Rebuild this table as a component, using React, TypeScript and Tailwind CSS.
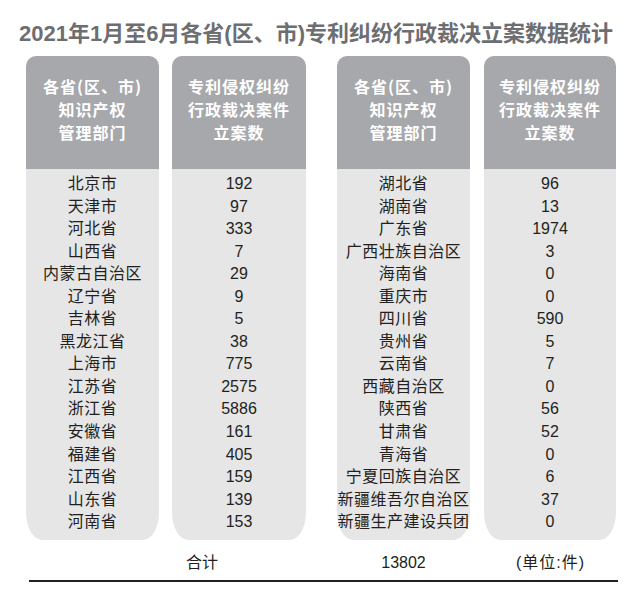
import React from 'react';

type Column = {
  header: string[];
  rows: string[];
  width: string;
  gap: string;
  names?: boolean;
};

const LEFT_NAMES = [
  '北京市', '天津市', '河北省', '山西省', '内蒙古自治区', '辽宁省', '吉林省', '黑龙江省',
  '上海市', '江苏省', '浙江省', '安徽省', '福建省', '江西省', '山东省', '河南省',
];
const LEFT_COUNTS = [
  '192', '97', '333', '7', '29', '9', '5', '38', '775', '2575', '5886', '161', '405', '159', '139', '153',
];
const RIGHT_NAMES = [
  '湖北省', '湖南省', '广东省', '广西壮族自治区', '海南省', '重庆市', '四川省', '贵州省',
  '云南省', '西藏自治区', '陕西省', '甘肃省', '青海省', '宁夏回族自治区', '新疆维吾尔自治区', '新疆生产建设兵团',
];
const RIGHT_COUNTS = [
  '96', '13', '1974', '3', '0', '0', '590', '5', '7', '0', '56', '52', '0', '6', '37', '0',
];

const DEPT_HEADER = ['各省(区、市)', '知识产权', '管理部门'];
const COUNT_HEADER = ['专利侵权纠纷', '行政裁决案件', '立案数'];

const COLUMNS: Column[] = [
  { header: DEPT_HEADER, rows: LEFT_NAMES, width: 'w-[133px]', gap: 'ml-[26px]', names: true },
  { header: COUNT_HEADER, rows: LEFT_COUNTS, width: 'w-[134px]', gap: 'ml-[13px]' },
  { header: DEPT_HEADER, rows: RIGHT_NAMES, width: 'w-[133px]', gap: 'ml-[31px]', names: true },
  { header: COUNT_HEADER, rows: RIGHT_COUNTS, width: 'w-[132px]', gap: 'ml-[14px]' },
];

const FONT = "font-['Liberation_Sans','Noto_Sans_CJK_SC',sans-serif]";

const TableColumn: React.FC<{ col: Column }> = ({ col }) => (
  <div className={`${col.width} ${col.gap} flex flex-col shrink-0`}>
    <div className="h-[113px] rounded-t-[10px] bg-[#a7a8ab] pt-[19px] flex flex-col items-center">
      {col.header.map((line) => (
        <div
          key={line}
          className="text-[16px] leading-[23px] font-bold tracking-[1px] text-white font-['Noto_Sans_CJK_SC',sans-serif]"
        >
          {line}
        </div>
      ))}
    </div>
    <div className="bg-[#e6e6e7] rounded-bl-[16px_28px] rounded-br-[16px_28px] pt-[4px] pb-[6px] flex flex-col items-center">
      {col.rows.map((row, i) => (
        <div
          key={i}
          className={`text-[16px] leading-[22.55px] text-[#231f20] whitespace-nowrap ${
            col.names ? 'tracking-[0.5px]' : ''
          }`}
        >
          {row}
        </div>
      ))}
    </div>
  </div>
);

const App: React.FC = () => {
  return (
    <div className={`w-[632px] h-[595px] bg-white overflow-hidden ${FONT}`}>
      {/* Title */}
      <div className="pt-[20px] h-[56px] text-center">
        <h1 className="text-[22px] leading-[28px] font-bold text-[#6d6e71] whitespace-nowrap">
          2021年1月至6月各省(区、市)专利纠纷行政裁决立案数据统计
        </h1>
      </div>

      {/* Table */}
      <div className="flex">
        {COLUMNS.map((col, i) => (
          <TableColumn key={i} col={col} />
        ))}
      </div>

      {/* Total row */}
      <div className="flex mt-[12px] text-[16px] leading-[22px] text-[#231f20]">
        <div className="w-[186px] shrink-0" />
        <div className="w-[151px] shrink-0">合计</div>
        <div className="w-[133px] shrink-0 text-center">13802</div>
        <div className="w-[46px] shrink-0" />
        <div className="whitespace-nowrap tracking-[1px]">(单位:件)</div>
      </div>

      {/* Bottom rule */}
      <div className="ml-[29px] w-[589px] mt-[6px] h-[2px] bg-[#231f20]" />
    </div>
  );
};

export default App;
